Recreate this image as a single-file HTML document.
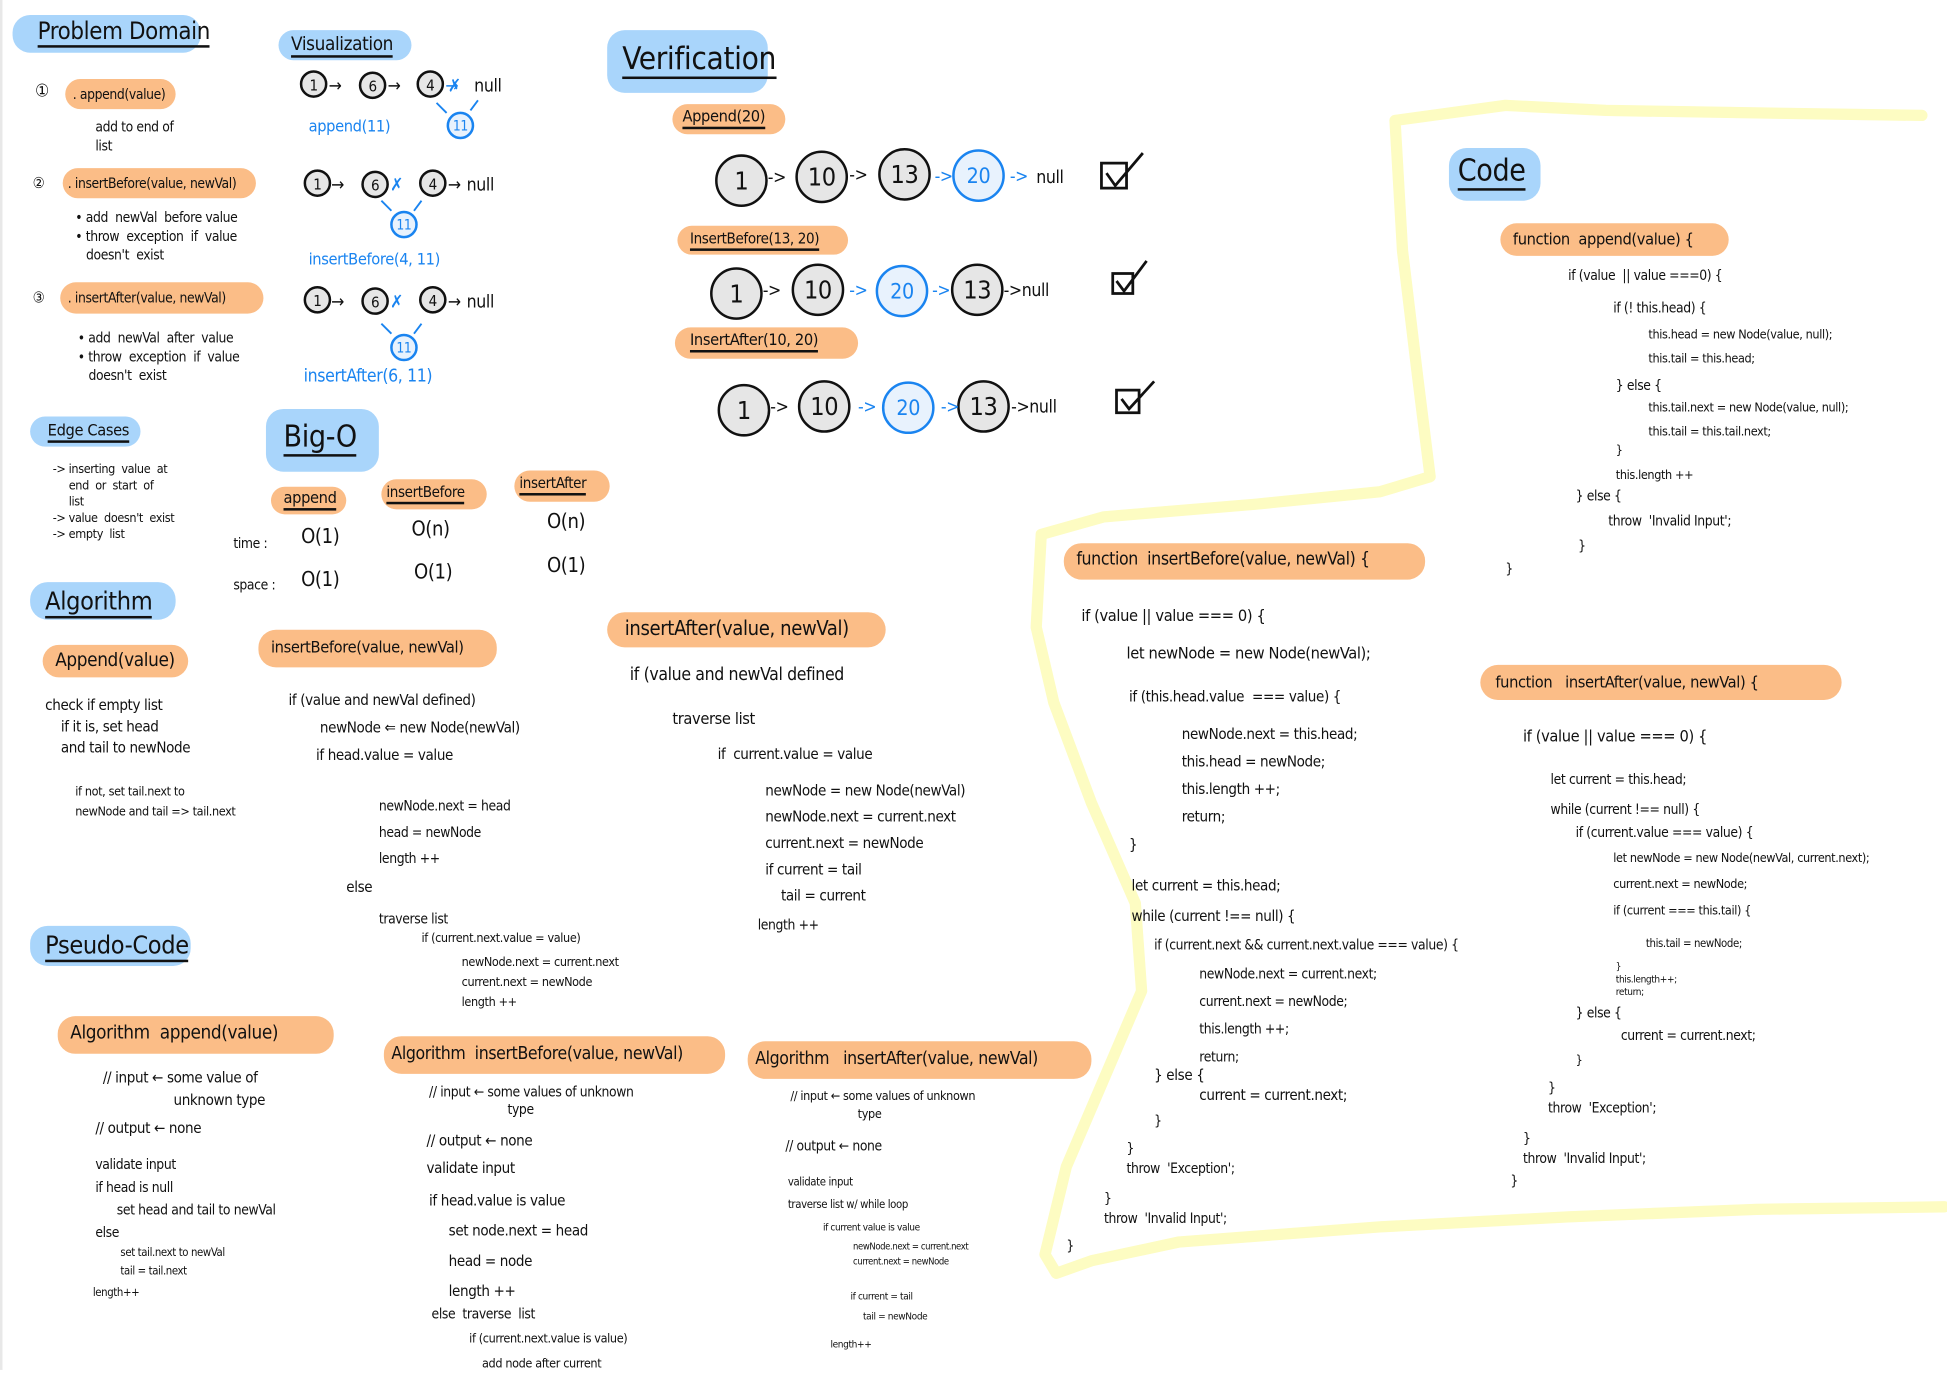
<!DOCTYPE html>
<html><head><meta charset="utf-8">
<style>
html,body{margin:0;padding:0;background:#fff;}
body{width:1947px;height:1370px;overflow:hidden;position:relative;}
#w{position:absolute;left:0;top:0;width:1552px;height:1092px;transform:scale(1.2545);transform-origin:0 0;font-family:"DejaVu Sans Condensed","Liberation Sans Narrow","Liberation Sans",sans-serif;color:#111;letter-spacing:-0.3px;font-weight:300;}
.p{position:absolute;border-radius:14px;}
.b{background:#a9d5fb;}
.o{background:#fbbd87;}
.t{position:absolute;white-space:nowrap;font-size:12px;line-height:15px;}
.h{position:absolute;white-space:nowrap;}
.u{border-bottom:2px solid #111;}
.bl{color:#1a84f0;}
svg{position:absolute;left:0;top:0;}
</style></head><body>
<div id="w">
<div style="position:absolute;left:0;top:0;width:2px;height:1092px;background:#e8e8e8"></div>
<svg width="1552" height="1092">
<path d="M1532 92 L1400 90 L1280 88 L1200 84 L1112 96 L1118 200 L1130 300 L1140 380 L1100 392 L1000 402 L880 412 L830 426 L826 500 L840 560 L870 640 L905 720 L910 790 L880 860 L850 930 L833 1000 L842 1015 L870 1005 L940 990 L1100 978 L1250 970 L1400 964 L1550 962" fill="none" stroke="#fdfcc2" stroke-width="9" stroke-linejoin="round" stroke-linecap="round"/>
</svg>

<!-- blue headers -->
<div class="p b" style="left:10px;top:12px;width:150px;height:30px"></div>
<div class="h u" style="left:30px;top:14px;font-size:19px">Problem Domain</div>
<div class="p b" style="left:222px;top:24px;width:106px;height:24px"></div>
<div class="h u" style="left:232px;top:26px;font-size:15px">Visualization</div>
<div class="p b" style="left:484px;top:24px;width:128px;height:50px"></div>
<div class="h u" style="left:496px;top:32px;font-size:25px">Verification</div>
<div class="p b" style="left:1155px;top:118px;width:73px;height:42px"></div>
<div class="h u" style="left:1162px;top:122px;font-size:24px">Code</div>
<div class="p b" style="left:24px;top:332px;width:88px;height:24px"></div>
<div class="h u" style="left:38px;top:336px;font-size:13px">Edge Cases</div>
<div class="p b" style="left:212px;top:326px;width:90px;height:50px"></div>
<div class="h u" style="left:226px;top:334px;font-size:24px">Big-O</div>
<div class="p b" style="left:24px;top:464px;width:116px;height:30px"></div>
<div class="h u" style="left:36px;top:467px;font-size:20px">Algorithm</div>
<div class="p b" style="left:24px;top:738px;width:128px;height:32px"></div>
<div class="h u" style="left:36px;top:741px;font-size:20px">Pseudo-Code</div>

<!-- orange pills -->
<div class="p o" style="left:52px;top:63px;width:88px;height:24px"></div><div class="t" style="left:58px;top:68px;font-size:11px">. append(value)</div>
<div class="p o" style="left:50px;top:134px;width:154px;height:24px"></div><div class="t" style="left:54px;top:139px;font-size:11px">. insertBefore(value, newVal)</div>
<div class="p o" style="left:48px;top:225px;width:162px;height:25px"></div><div class="t" style="left:54px;top:230px;font-size:11px">. insertAfter(value, newVal)</div>
<div class="p o" style="left:536px;top:83px;width:90px;height:24px"></div><div class="t u" style="left:544px;top:86px;font-size:13px">Append(20)</div>
<div class="p o" style="left:540px;top:180px;width:136px;height:23px"></div><div class="t u" style="left:550px;top:183px;font-size:12px">InsertBefore(13, 20)</div>
<div class="p o" style="left:538px;top:261px;width:146px;height:25px"></div><div class="t u" style="left:550px;top:264px;font-size:13px">InsertAfter(10, 20)</div>
<div class="p o" style="left:216px;top:388px;width:60px;height:22px"></div><div class="t u" style="left:226px;top:390px;font-size:13px">append</div>
<div class="p o" style="left:304px;top:382px;width:84px;height:24px"></div><div class="t u" style="left:308px;top:385px;font-size:12px">insertBefore</div>
<div class="p o" style="left:410px;top:375px;width:76px;height:25px"></div><div class="t u" style="left:414px;top:378px;font-size:12px">insertAfter</div>
<div class="p o" style="left:34px;top:514px;width:116px;height:26px"></div><div class="t" style="left:44px;top:519px;font-size:15px">Append(value)</div>
<div class="p o" style="left:206px;top:502px;width:190px;height:30px"></div><div class="t" style="left:216px;top:509px;font-size:13px">insertBefore(value, newVal)</div>
<div class="p o" style="left:484px;top:488px;width:222px;height:28px"></div><div class="t" style="left:498px;top:493px;font-size:16px">insertAfter(value, newVal)</div>
<div class="p o" style="left:848px;top:433px;width:288px;height:29px"></div><div class="t" style="left:858px;top:439px;font-size:14px">function&nbsp; insertBefore(value, newVal) {</div>
<div class="p o" style="left:1196px;top:178px;width:182px;height:26px"></div><div class="t" style="left:1206px;top:184px;font-size:13px">function&nbsp; append(value) {</div>
<div class="p o" style="left:1180px;top:530px;width:288px;height:28px"></div><div class="t" style="left:1192px;top:537px;font-size:13px">function&nbsp;&nbsp; insertAfter(value, newVal) {</div>
<div class="p o" style="left:46px;top:810px;width:220px;height:30px"></div><div class="t" style="left:56px;top:816px;font-size:15px">Algorithm&nbsp; append(value)</div>
<div class="p o" style="left:306px;top:826px;width:272px;height:30px"></div><div class="t" style="left:312px;top:833px;font-size:14px">Algorithm&nbsp; insertBefore(value, newVal)</div>
<div class="p o" style="left:596px;top:830px;width:274px;height:30px"></div><div class="t" style="left:602px;top:837px;font-size:14px">Algorithm&nbsp;&nbsp; insertAfter(value, newVal)</div>

<!-- circles -->
<svg width="1552" height="1092" font-family="DejaVu Sans Condensed, Liberation Sans, sans-serif">
<g stroke="#111" stroke-width="2" fill="#e6e6e6">
<circle cx="250" cy="67" r="10"/><circle cx="297" cy="68" r="10"/><circle cx="343" cy="67" r="10"/>
<circle cx="253" cy="146" r="10"/><circle cx="299" cy="147" r="10"/><circle cx="345" cy="146" r="10"/>
<circle cx="253" cy="239" r="10"/><circle cx="299" cy="240" r="10"/><circle cx="345" cy="239" r="10"/>
<circle cx="591" cy="144" r="20"/><circle cx="655" cy="141" r="20"/><circle cx="721" cy="139" r="20"/>
<circle cx="587" cy="234" r="20"/><circle cx="652" cy="231" r="20"/><circle cx="779" cy="231" r="20"/>
<circle cx="593" cy="327" r="20"/><circle cx="657" cy="324" r="20"/><circle cx="784" cy="324" r="20"/>
</g>
<g stroke="#1a84f0" stroke-width="2" fill="#e8f2fd">
<circle cx="367" cy="100" r="10"/><circle cx="322" cy="179" r="10"/><circle cx="322" cy="277" r="10"/>
<circle cx="780" cy="140" r="20"/><circle cx="719" cy="232" r="20"/><circle cx="724" cy="325" r="20"/>
</g>
<g font-size="12" text-anchor="middle" fill="#111">
<text x="250" y="72">1</text><text x="297" y="73">6</text><text x="343" y="72">4</text>
<text x="253" y="151">1</text><text x="299" y="152">6</text><text x="345" y="151">4</text>
<text x="253" y="244">1</text><text x="299" y="245">6</text><text x="345" y="244">4</text>
</g>
<g font-size="11" text-anchor="middle" fill="#1a84f0"><text x="367" y="104">11</text><text x="322" y="183">11</text><text x="322" y="281">11</text></g>
<g font-size="20" text-anchor="middle" fill="#111">
<text x="591" y="151">1</text><text x="655" y="148">10</text><text x="721" y="146">13</text>
<text x="587" y="241">1</text><text x="652" y="238">10</text><text x="779" y="238">13</text>
<text x="593" y="334">1</text><text x="657" y="331">10</text><text x="784" y="331">13</text>
</g>
<g font-size="17" text-anchor="middle" fill="#1a84f0"><text x="780" y="146">20</text><text x="719" y="238">20</text><text x="724" y="331">20</text></g>
<g fill="#111" font-size="14">
<text x="262" y="73">→</text><text x="309" y="73">→</text><text x="378" y="73">null</text>
<text x="264" y="152">→</text><text x="357" y="152">→</text><text x="372" y="152">null</text>
<text x="264" y="245">→</text><text x="357" y="245">→</text><text x="372" y="245">null</text>
<text x="612" y="146">-&gt;</text><text x="677" y="144">-&gt;</text><text x="826" y="146">null</text>
<text x="608" y="236">-&gt;</text><text x="800" y="236">-&gt;null</text>
<text x="614" y="329">-&gt;</text><text x="806" y="329">-&gt;null</text>
</g>
<g fill="#1a84f0" font-size="14"><text x="355" y="73">→</text><text x="745" y="145">-&gt;</text><text x="805" y="145">-&gt;</text>
<text x="677" y="236">-&gt;</text><text x="743" y="236">-&gt;</text><text x="684" y="329">-&gt;</text><text x="750" y="329">-&gt;</text>
<text x="311" y="152">✗</text><text x="311" y="245">✗</text><text x="357" y="73">✗</text></g>
<g stroke="#1a84f0" stroke-width="1.5" fill="none">
<path d="M348 82 l8 8 M375 88 l6 -8"/><path d="M304 160 l8 8 M330 168 l6 -8"/><path d="M304 258 l8 8 M330 266 l6 -8"/>
</g>
<g stroke="#111" stroke-width="2.2" fill="none">
<path d="M878 130 l0 20 l20 0 l0 -20 z M882 138 l7 10 l22 -26"/>
<path d="M887 218 l0 16 l16 0 l0 -16 z M890 224 l6 8 l18 -24"/>
<path d="M890 311 l0 18 l18 0 l0 -18 z M894 318 l6 8 l20 -22"/>
</g>
</svg>

<!-- problem domain text -->
<div class="t" style="left:28px;top:66px;font-size:14px">①</div>
<div class="t" style="left:76px;top:94px;font-size:11px">add to end of<br>list</div>
<div class="t" style="left:26px;top:139px">②</div>
<div class="t" style="left:60px;top:166px;font-size:11px">• add&nbsp; newVal&nbsp; before value<br>• throw&nbsp; exception&nbsp; if&nbsp; value<br>&nbsp;&nbsp; doesn't&nbsp; exist</div>
<div class="t" style="left:26px;top:230px">③</div>
<div class="t" style="left:62px;top:262px;font-size:11px">• add&nbsp; newVal&nbsp; after&nbsp; value<br>• throw&nbsp; exception&nbsp; if&nbsp; value<br>&nbsp;&nbsp; doesn't&nbsp; exist</div>
<div class="t bl" style="left:246px;top:94px;font-size:13px">append(11)</div>
<div class="t bl" style="left:246px;top:200px;font-size:13px">insertBefore(4, 11)</div>
<div class="t bl" style="left:242px;top:293px;font-size:14px">insertAfter(6, 11)</div>

<div class="t" style="left:42px;top:368px;font-size:10px;line-height:13px">-&gt; inserting&nbsp; value&nbsp; at<br>&nbsp;&nbsp;&nbsp;&nbsp; end&nbsp; or&nbsp; start&nbsp; of<br>&nbsp;&nbsp;&nbsp;&nbsp; list<br>-&gt; value&nbsp; doesn't&nbsp; exist<br>-&gt; empty&nbsp; list</div>
<div class="t" style="left:186px;top:426px;font-size:11px">time :</div>
<div class="t" style="left:186px;top:459px;font-size:11px">space :</div>
<div class="t" style="left:240px;top:420px;font-size:16px">O(1)</div>
<div class="t" style="left:240px;top:454px;font-size:16px">O(1)</div>
<div class="t" style="left:328px;top:414px;font-size:16px">O(n)</div>
<div class="t" style="left:330px;top:448px;font-size:16px">O(1)</div>
<div class="t" style="left:436px;top:408px;font-size:16px">O(n)</div>
<div class="t" style="left:436px;top:443px;font-size:16px">O(1)</div>

<!-- Algorithm -->
<div class="t" style="left:36px;top:554px;font-size:12px;line-height:17px">check if empty list<br>&nbsp;&nbsp;&nbsp; if it is, set head<br>&nbsp;&nbsp;&nbsp; and tail to newNode</div>
<div class="t" style="left:60px;top:624px;font-size:10px;line-height:16px">if not, set tail.next to<br>newNode and tail =&gt; tail.next</div>
<div class="t" style="left:230px;top:547px;font-size:12px;line-height:22px">if (value and newVal defined)<br>&nbsp;&nbsp;&nbsp;&nbsp;&nbsp;&nbsp;&nbsp; newNode ⇐ new Node(newVal)<br>&nbsp;&nbsp;&nbsp;&nbsp;&nbsp;&nbsp; if head.value = value</div>
<div class="t" style="left:302px;top:632px;font-size:11px;line-height:21px">newNode.next = head<br>head = newNode<br>length ++</div>
<div class="t" style="left:276px;top:700px;font-size:12px">else</div>
<div class="t" style="left:302px;top:725px;font-size:11px">traverse list</div>
<div class="t" style="left:336px;top:741px;font-size:10px">if (current.next.value = value)</div>
<div class="t" style="left:368px;top:760px;font-size:10px;line-height:16px">newNode.next = current.next<br>current.next = newNode<br>length ++</div>
<div class="t" style="left:502px;top:531px;font-size:14px">if (value and newVal defined</div>
<div class="t" style="left:536px;top:566px;font-size:13px">traverse list</div>
<div class="t" style="left:572px;top:594px;font-size:12px">if&nbsp; current.value = value</div>
<div class="t" style="left:610px;top:620px;font-size:12px;line-height:21px">newNode = new Node(newVal)<br>newNode.next = current.next<br>current.next = newNode<br>if current = tail<br>&nbsp;&nbsp;&nbsp; tail = current</div>
<div class="t" style="left:604px;top:730px;font-size:11px">length ++</div>

<!-- pseudo -->
<div class="t" style="left:82px;top:850px;font-size:12px;line-height:18px">// input ← some value of<br>&nbsp;&nbsp;&nbsp;&nbsp;&nbsp;&nbsp;&nbsp;&nbsp;&nbsp;&nbsp;&nbsp;&nbsp;&nbsp;&nbsp;&nbsp;&nbsp;&nbsp; unknown type</div>
<div class="t" style="left:76px;top:892px;font-size:12px">// output ← none</div>
<div class="t" style="left:76px;top:920px;font-size:11px;line-height:18px">validate input<br>if head is null<br>&nbsp;&nbsp;&nbsp;&nbsp;&nbsp; set head and tail to newVal<br>else</div>
<div class="t" style="left:96px;top:992px;font-size:9px;line-height:15px">set tail.next to newVal<br>tail = tail.next</div>
<div class="t" style="left:74px;top:1024px;font-size:9px">length++</div>
<div class="t" style="left:342px;top:864px;font-size:11px;line-height:14px">// input ← some values of unknown<br>&nbsp;&nbsp;&nbsp;&nbsp;&nbsp;&nbsp;&nbsp;&nbsp;&nbsp;&nbsp;&nbsp;&nbsp;&nbsp;&nbsp;&nbsp;&nbsp;&nbsp;&nbsp;&nbsp;&nbsp;&nbsp; type</div>
<div class="t" style="left:340px;top:898px;font-size:12px;line-height:22px">// output ← none<br>validate input</div>
<div class="t" style="left:342px;top:945px;font-size:12px;line-height:24px">if head.value is value<br>&nbsp;&nbsp;&nbsp;&nbsp; set node.next = head<br>&nbsp;&nbsp;&nbsp;&nbsp; head = node<br>&nbsp;&nbsp;&nbsp;&nbsp; length ++</div>
<div class="t" style="left:344px;top:1040px;font-size:11px">else&nbsp; traverse&nbsp; list</div>
<div class="t" style="left:374px;top:1058px;font-size:10px;line-height:20px">if (current.next.value is value)<br>&nbsp;&nbsp;&nbsp; add node after current</div>
<div class="t" style="left:630px;top:868px;font-size:10px;line-height:14px">// input ← some values of unknown<br>&nbsp;&nbsp;&nbsp;&nbsp;&nbsp;&nbsp;&nbsp;&nbsp;&nbsp;&nbsp;&nbsp;&nbsp;&nbsp;&nbsp;&nbsp;&nbsp;&nbsp;&nbsp;&nbsp;&nbsp; type</div>
<div class="t" style="left:626px;top:906px;font-size:11px">// output ← none</div>
<div class="t" style="left:628px;top:934px;font-size:9px;line-height:18px">validate input<br>traverse list w/ while loop</div>
<div class="t" style="left:656px;top:972px;font-size:8px;line-height:13px">if current value is value</div>
<div class="t" style="left:680px;top:988px;font-size:7.5px;line-height:12px">newNode.next = current.next<br>current.next = newNode</div>
<div class="t" style="left:678px;top:1026px;font-size:8px;line-height:16px">if current = tail<br>&nbsp;&nbsp;&nbsp;&nbsp; tail = newNode</div>
<div class="t" style="left:662px;top:1064px;font-size:8px">length++</div>

<!-- code: append -->
<div class="t" style="left:1250px;top:212px;font-size:11px">if (value&nbsp; || value ===0) {</div>
<div class="t" style="left:1286px;top:238px;font-size:11px">if (! this.head) {</div>
<div class="t" style="left:1314px;top:258px;font-size:10px;line-height:19px">this.head = new Node(value, null);<br>this.tail = this.head;</div>
<div class="t" style="left:1288px;top:300px;font-size:11px">} else {</div>
<div class="t" style="left:1314px;top:316px;font-size:10px;line-height:19px">this.tail.next = new Node(value, null);<br>this.tail = this.tail.next;</div>
<div class="t" style="left:1288px;top:350px;font-size:10px;line-height:20px">}<br>this.length ++</div>
<div class="t" style="left:1256px;top:388px;font-size:11px">} else {</div>
<div class="t" style="left:1282px;top:408px;font-size:11px">throw&nbsp; 'Invalid Input';</div>
<div class="t" style="left:1258px;top:428px;font-size:11px">}</div>
<div class="t" style="left:1200px;top:446px;font-size:11px">}</div>

<!-- code: insertBefore -->
<div class="t" style="left:862px;top:484px;font-size:13px">if (value || value === 0) {</div>
<div class="t" style="left:898px;top:514px;font-size:13px">let newNode = new Node(newVal);</div>
<div class="t" style="left:900px;top:548px;font-size:12px">if (this.head.value&nbsp; === value) {</div>
<div class="t" style="left:942px;top:574px;font-size:12px;line-height:22px">newNode.next = this.head;<br>this.head = newNode;<br>this.length ++;<br>return;</div>
<div class="t" style="left:900px;top:666px;font-size:12px">}</div>
<div class="t" style="left:902px;top:694px;font-size:12px;line-height:24px">let current = this.head;<br>while (current !== null) {</div>
<div class="t" style="left:920px;top:746px;font-size:11px">if (current.next &amp;&amp; current.next.value === value) {</div>
<div class="t" style="left:956px;top:766px;font-size:11px;line-height:22px">newNode.next = current.next;<br>current.next = newNode;<br>this.length ++;<br>return;</div>
<div class="t" style="left:920px;top:850px;font-size:12px">} else {</div>
<div class="t" style="left:956px;top:866px;font-size:12px">current = current.next;</div>
<div class="t" style="left:920px;top:886px;font-size:11px">}</div>
<div class="t" style="left:898px;top:908px;font-size:11px;line-height:16px">}<br>throw&nbsp; 'Exception';</div>
<div class="t" style="left:880px;top:948px;font-size:11px;line-height:16px">}<br>throw&nbsp; 'Invalid Input';</div>
<div class="t" style="left:850px;top:986px;font-size:11px">}</div>

<!-- code: insertAfter -->
<div class="t" style="left:1214px;top:580px;font-size:13px">if (value || value === 0) {</div>
<div class="t" style="left:1236px;top:610px;font-size:11px;line-height:24px">let current = this.head;<br>while (current !== null) {</div>
<div class="t" style="left:1256px;top:656px;font-size:11px">if (current.value === value) {</div>
<div class="t" style="left:1286px;top:674px;font-size:10px;line-height:21px">let newNode = new Node(newVal, current.next);<br>current.next = newNode;<br>if (current === this.tail) {</div>
<div class="t" style="left:1312px;top:746px;font-size:9px">this.tail = newNode;</div>
<div class="t" style="left:1288px;top:766px;font-size:8px;line-height:10px">}<br>this.length++;<br>return;</div>
<div class="t" style="left:1256px;top:800px;font-size:11px">} else {</div>
<div class="t" style="left:1292px;top:818px;font-size:11px">current = current.next;</div>
<div class="t" style="left:1256px;top:838px;font-size:10px">}</div>
<div class="t" style="left:1234px;top:860px;font-size:11px;line-height:16px">}<br>throw&nbsp; 'Exception';</div>
<div class="t" style="left:1214px;top:900px;font-size:11px;line-height:16px">}<br>throw&nbsp; 'Invalid Input';</div>
<div class="t" style="left:1204px;top:934px;font-size:11px">}</div>
</div>
</body></html>
